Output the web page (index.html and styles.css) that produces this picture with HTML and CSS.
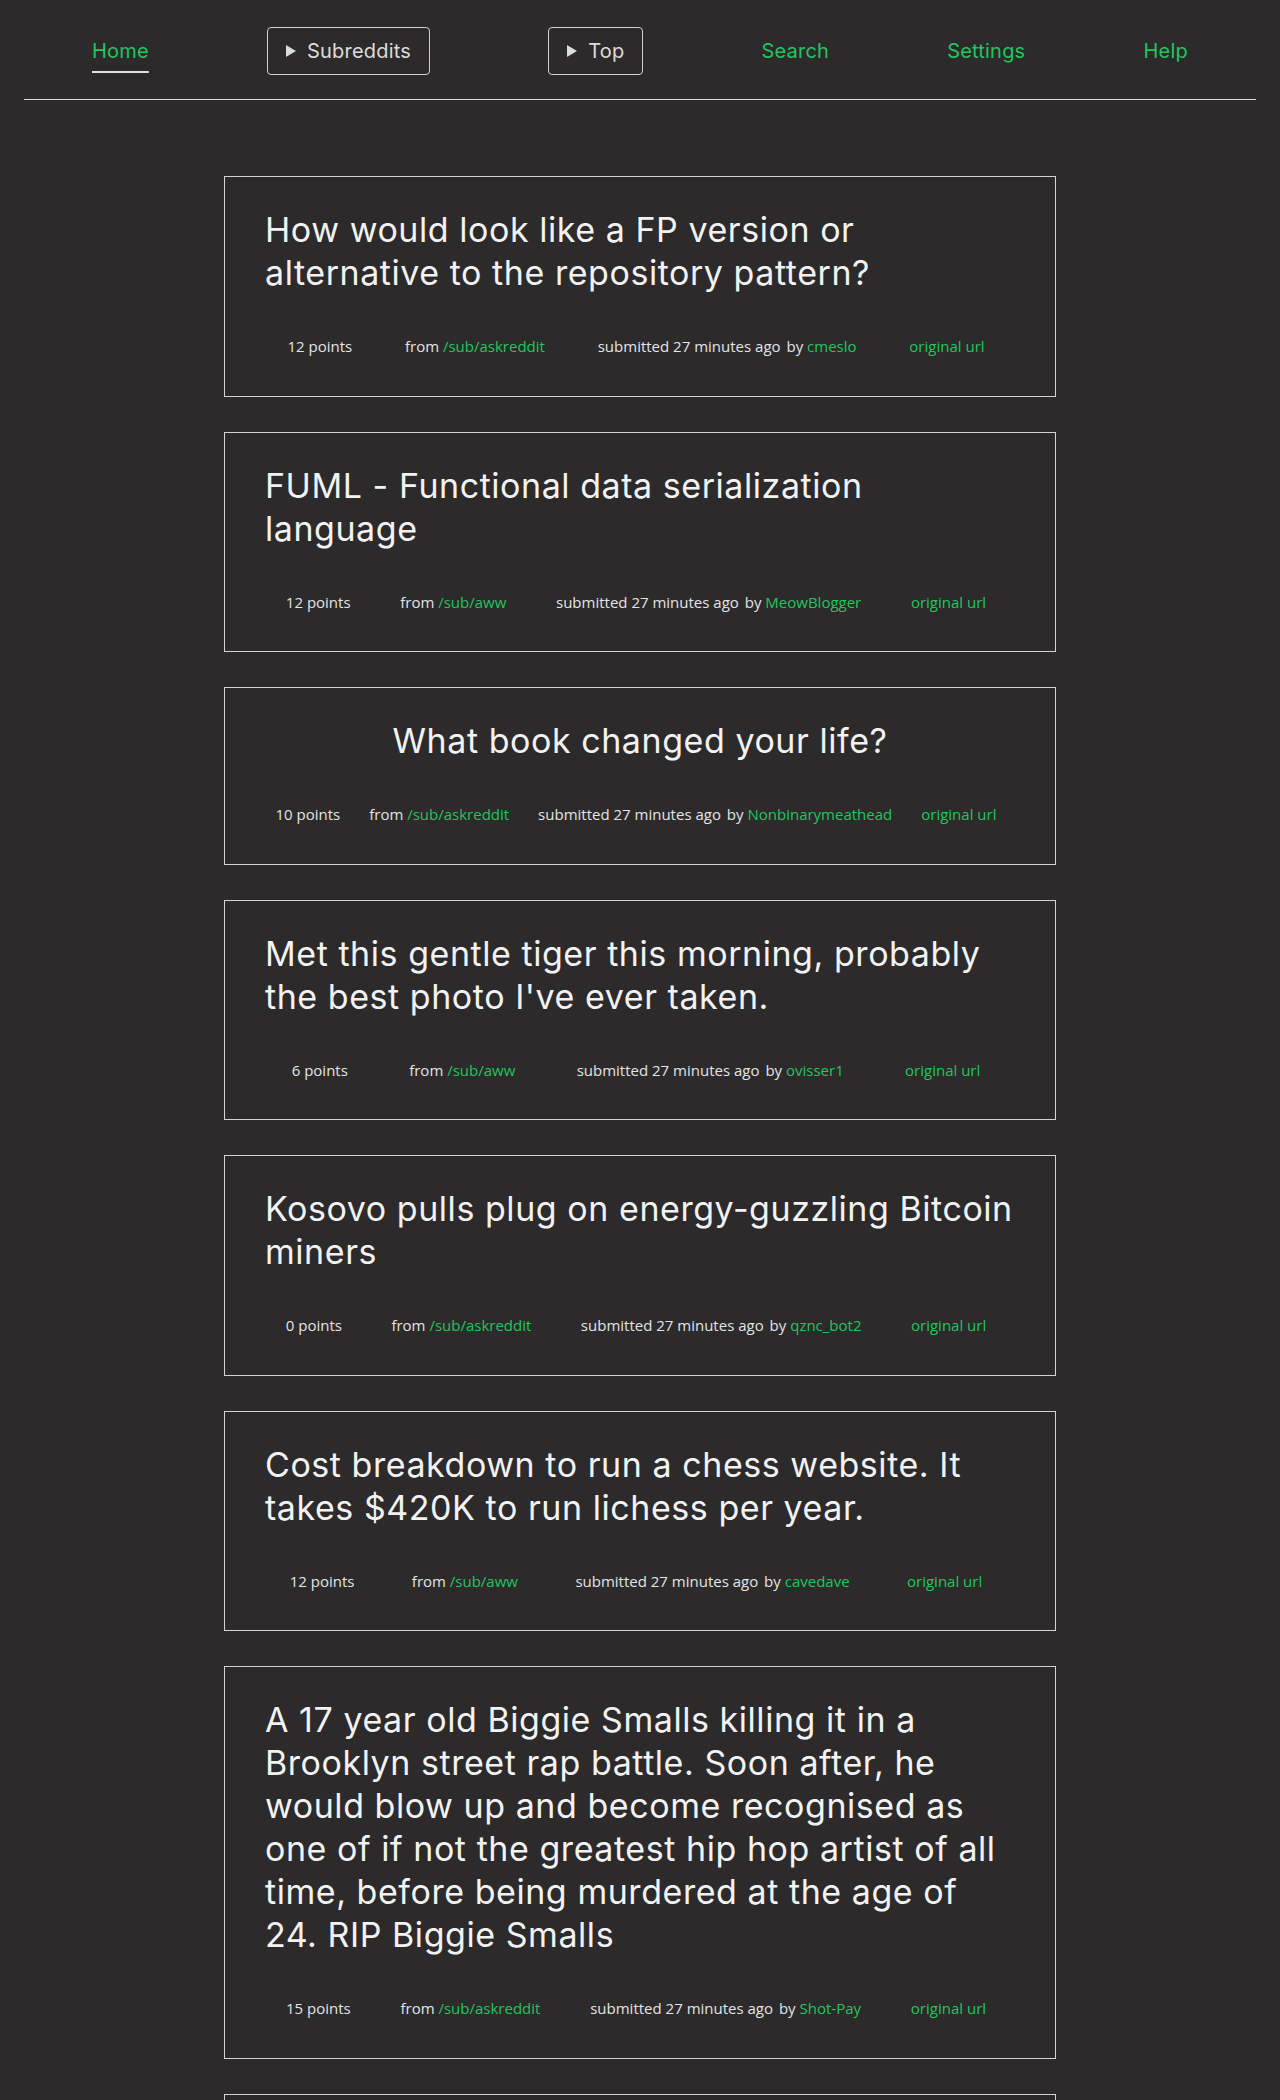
FILE: index.html
```html
<!DOCTYPE html>
<html lang="en">
<head>
<meta charset="utf-8">
<title>Reddit reader</title>
<link rel="stylesheet" href="styles.css">
</head>
<body>
<nav class="topnav">
  <a class="nav-link active" href="#">Home</a>
  <details class="nav-drop"><summary>Subreddits</summary></details>
  <details class="nav-drop"><summary>Top</summary></details>
  <a class="nav-link" href="#">Search</a>
  <a class="nav-link" href="#">Settings</a>
  <a class="nav-link" href="#">Help</a>
</nav>
<main class="feed">
  <article class="post">
    <h2 class="post-title"><a href="#">How would look like a FP version or alternative to the repository pattern?</a></h2>
    <div class="post-meta">
      <span>12 points</span>
      <span>from <a href="#">/sub/askreddit</a></span>
      <span>submitted 27 minutes ago <span class="by">by</span> <a href="#">cmeslo</a></span>
      <a href="#">original url</a>
    </div>
  </article>
  <article class="post">
    <h2 class="post-title"><a href="#">FUML - Functional data serialization language</a></h2>
    <div class="post-meta">
      <span>12 points</span>
      <span>from <a href="#">/sub/aww</a></span>
      <span>submitted 27 minutes ago <span class="by">by</span> <a href="#">MeowBlogger</a></span>
      <a href="#">original url</a>
    </div>
  </article>
  <article class="post">
    <h2 class="post-title"><a href="#">What book changed your life?</a></h2>
    <div class="post-meta">
      <span>10 points</span>
      <span>from <a href="#">/sub/askreddit</a></span>
      <span>submitted 27 minutes ago <span class="by">by</span> <a href="#">Nonbinarymeathead</a></span>
      <a href="#">original url</a>
    </div>
  </article>
  <article class="post">
    <h2 class="post-title"><a href="#">Met this gentle tiger this morning, probably the best photo I've ever taken.</a></h2>
    <div class="post-meta">
      <span>6 points</span>
      <span>from <a href="#">/sub/aww</a></span>
      <span>submitted 27 minutes ago <span class="by">by</span> <a href="#">ovisser1</a></span>
      <a href="#">original url</a>
    </div>
  </article>
  <article class="post">
    <h2 class="post-title"><a href="#">Kosovo pulls plug on energy-guzzling Bitcoin miners</a></h2>
    <div class="post-meta">
      <span>0 points</span>
      <span>from <a href="#">/sub/askreddit</a></span>
      <span>submitted 27 minutes ago <span class="by">by</span> <a href="#">qznc_bot2</a></span>
      <a href="#">original url</a>
    </div>
  </article>
  <article class="post">
    <h2 class="post-title"><a href="#">Cost breakdown to run a chess website. It takes $420K to run lichess per year.</a></h2>
    <div class="post-meta">
      <span>12 points</span>
      <span>from <a href="#">/sub/aww</a></span>
      <span>submitted 27 minutes ago <span class="by">by</span> <a href="#">cavedave</a></span>
      <a href="#">original url</a>
    </div>
  </article>
  <article class="post">
    <h2 class="post-title"><a href="#">A 17 year old Biggie Smalls killing it in a Brooklyn street rap battle. Soon after, he would blow up and become recognised as one of if not the greatest hip hop artist of all time, before being murdered at the age of 24. RIP Biggie Smalls</a></h2>
    <div class="post-meta">
      <span>15 points</span>
      <span>from <a href="#">/sub/askreddit</a></span>
      <span>submitted 27 minutes ago <span class="by">by</span> <a href="#">Shot-Pay</a></span>
      <a href="#">original url</a>
    </div>
  </article>
  <article class="post">
    <h2 class="post-title"><a href="#">Show HN: A tiny static site generator</a></h2>
    <div class="post-meta">
      <span>9 points</span>
      <span>from <a href="#">/sub/askreddit</a></span>
      <span>submitted 27 minutes ago <span class="by">by</span> <a href="#">lambdafan</a></span>
      <a href="#">original url</a>
    </div>
  </article>
</main>
</body>
</html>
```

FILE: styles.css
```css
html, body {
  margin: 0;
  padding: 0;
  background: #2c2a2b;
}

body {
  font-family: Inter, "Open Sans", sans-serif;
  color: #e6e6e6;
}

a {
  color: #22c55e;
  text-decoration: none;
}

.topnav {
  margin: 0 24px;
  padding: 27px 68px 24px;
  display: flex;
  justify-content: space-between;
  align-items: center;
  border-bottom: 1px solid #d8d8d8;
  font-size: 20px;
  line-height: 28px;
  letter-spacing: 0.2px;
}

.nav-link {
  color: #22c55e;
}

.nav-link.active {
  text-decoration: underline;
  text-decoration-color: #e0e0e0;
  text-decoration-thickness: 2px;
  text-underline-offset: 13px;
}

.nav-drop summary {
  list-style: none;
  display: flex;
  align-items: center;
  gap: 11px;
  height: 48px;
  box-sizing: border-box;
  padding: 0 18px;
  border: 1px solid #d0d0d0;
  border-radius: 4px;
  color: #dcdcdc;
  cursor: pointer;
}

.nav-drop summary::-webkit-details-marker {
  display: none;
}

.nav-drop summary::before {
  content: "";
  width: 0;
  height: 0;
  border-left: 10px solid #dcdcdc;
  border-top: 6px solid transparent;
  border-bottom: 6px solid transparent;
}

.feed {
  padding-top: 76px;
}

.post {
  width: 832px;
  box-sizing: border-box;
  margin: 0 auto 35px;
  border: 1px solid #d4d4d4;
  padding: 31px 40px 39.5px;
}

.post-title {
  display: flex;
  justify-content: center;
  margin: 0 0 42px;
  font-size: 34px;
  line-height: 43px;
  font-weight: 400;
  letter-spacing: 0.55px;
}

.post-title a {
  color: #f2f2f2;
}

.post-meta {
  display: flex;
  justify-content: space-around;
  align-items: center;
  font-family: "Open Sans", sans-serif;
  font-size: 15px;
  line-height: 20px;
  color: #e4e4e4;
}

.post-meta > * {
  margin-right: 8px;
}

.post-meta .by {
  margin-left: 2px;
}
```
